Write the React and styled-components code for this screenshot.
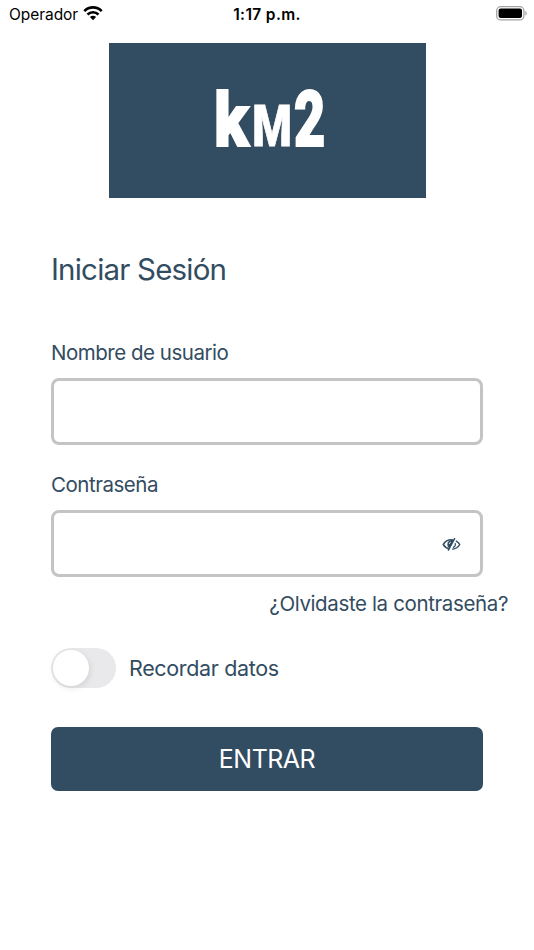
import React, { useState } from "react";
import styled, { createGlobalStyle } from "styled-components";

const NAVY = "#324c61";

const App = () => {
  const [remember, setRemember] = useState(false);
  const [visible, setVisible] = useState(false);

  return (
    <Screen>
      <GlobalStyle />
      <StatusBar>
        <Carrier>
          <span>Operador</span>
          <WifiIcon />
        </Carrier>
        <Clock>1:17 p.m.</Clock>
        <BatteryIcon />
      </StatusBar>
      <Logo>
        <LogoLetter $size={75} $width={35} $stretch={0.84} $stroke={2}>
          k
        </LogoLetter>
        <LogoLetter $size={58} $width={36} $stretch={0.78} $stroke={0.8}>
          M
        </LogoLetter>
        <LogoLetter $size={78} $width={29} $stretch={0.69} $stroke={2}>
          2
        </LogoLetter>
      </Logo>
      <Form onSubmit={(e) => e.preventDefault()}>
        <Title>Iniciar Sesión</Title>
        <Label htmlFor="user">Nombre de usuario</Label>
        <Field>
          <Input id="user" type="text" />
        </Field>
        <Label htmlFor="password">Contraseña</Label>
        <Field>
          <Input id="password" type={visible ? "text" : "password"} />
          <EyeButton type="button" onClick={() => setVisible(!visible)}>
            <EyeOffIcon />
          </EyeButton>
        </Field>
        <Forgot>¿Olvidaste la contraseña?</Forgot>
        <Remember>
          <Switch
            type="button"
            role="switch"
            aria-checked={remember}
            $on={remember}
            onClick={() => setRemember(!remember)}
          >
            <Knob />
          </Switch>
          <RememberText>Recordar datos</RememberText>
        </Remember>
        <Submit type="submit">ENTRAR</Submit>
      </Form>
    </Screen>
  );
};

export default App;

const WifiIcon = () => (
  <svg width="20" height="15" viewBox="0 0 20 15" fill="none" stroke="#000">
    <path d="M1.3 5.1C6.2.2 13.8.2 18.7 5.1" strokeWidth="2.7" />
    <path d="M4.5 8.5c3.1-3 7.9-3 11 0" strokeWidth="2.6" />
    <path d="M6.9 11.1c1.8-1.7 4.4-1.7 6.2 0L10 14.3z" fill="#000" stroke="none" />
  </svg>
);

const BatteryIcon = () => (
  <svg width="32" height="15" viewBox="0 0 32 15">
    <rect x=".7" y=".7" width="27.2" height="13.2" rx="4" fill="none" stroke="#a3a3a3" strokeWidth="1.3" />
    <rect x="2.6" y="2.6" width="23.4" height="9.4" rx="2" fill="#000" />
    <path d="M29.3 5c1.9.6 1.9 4 0 4.6z" fill="#a3a3a3" />
  </svg>
);

const EyeOffIcon = () => (
  <svg width="19" height="15" viewBox="0 0 20 16" fill="none" stroke={NAVY}>
    <path d="M7.6 12.7C4.6 12 2.4 10 1.2 8 3 4.9 6.2 3 10 3q1.2 0 2.2.3" strokeWidth="1.6" />
    <path d="M14.6 4.2C16.6 5.2 18 6.6 18.8 8c-1.6 2.9-4.6 4.7-8 5" strokeWidth="1.5" />
    <path d="M12.6 3.2 7.8 12A4.5 4.5 0 0 1 5.5 8c0-2.6 2-4.5 4.5-4.8z" fill={NAVY} stroke="none" />
    <path d="M13.6 1.2 6.4 14.6" strokeWidth="1.5" />
    <path d="M14 6.6c.5 2.1-.5 3.9-2.4 4.7" strokeWidth="1.3" />
    <path d="M7.6 7.4c.2-1 .8-1.7 1.7-2" stroke="#fff" strokeWidth=".9" />
  </svg>
);

const GlobalStyle = createGlobalStyle`
  * {
    box-sizing: border-box;
  }

  body {
    margin: 0;
    background: #fff;
    font-family: Inter, "Liberation Sans", sans-serif;
  }
`;

const Screen = styled.main`
  display: flex;
  flex-direction: column;
  align-items: center;
  width: 534px;
  height: 950px;
  overflow: hidden;
  background: #fff;
`;

const StatusBar = styled.header`
  display: grid;
  grid-template-columns: 1fr auto 1fr;
  align-items: center;
  width: 100%;
  height: 27px;
  padding: 0 6px 0 9px;
  color: #000;
  font-size: 15.5px;

  > svg {
    justify-self: end;
  }
`;

const Carrier = styled.div`
  display: flex;
  align-items: center;
  gap: 5px;
  letter-spacing: -0.05px;

  > span {
    padding-top: 1px;
  }
`;

const Clock = styled.div`
  padding: 1px 3px 0 0;
  font-weight: 600;
  letter-spacing: 0.35px;
`;

const Logo = styled.div`
  display: flex;
  align-items: baseline;
  justify-content: center;
  gap: 5px;
  width: 317px;
  height: 155px;
  margin-top: 16px;
  padding-left: 4px;
  background: ${NAVY};
  color: #fff;
  font-family: Roboto, "Liberation Sans", sans-serif;
  font-weight: 900;
  line-height: 153px;
`;

const LogoLetter = styled.span`
  display: flex;
  justify-content: center;
  width: ${({ $width }) => $width}px;
  font-size: ${({ $size }) => $size}px;
  transform: scaleX(${({ $stretch }) => $stretch});
  -webkit-text-stroke: ${({ $stroke }) => $stroke}px #fff;
`;

const Form = styled.form`
  display: flex;
  flex-direction: column;
  width: 432px;
  color: ${NAVY};
`;

const Title = styled.h1`
  margin: 51px 0 52px;
  font-size: 29.5px;
  font-weight: 400;
  line-height: 40px;
  letter-spacing: -0.8px;
`;

const Label = styled.label`
  height: 37px;
  font-size: 20.5px;
  line-height: 24px;
  letter-spacing: -0.48px;
`;

const Field = styled.div`
  display: flex;
  align-items: center;
  height: 67px;
  margin-bottom: 28px;
  padding: 0 19px;
  border: 3px solid #c4c4c4;
  border-radius: 8px;
`;

const Input = styled.input`
  flex: 1;
  min-width: 0;
  height: 100%;
  border: 0;
  outline: 0;
  background: transparent;
  color: inherit;
  font: inherit;
  font-size: 20px;
`;

const EyeButton = styled.button`
  display: flex;
  padding: 1px 0 0;
  border: 0;
  background: none;
`;

const Forgot = styled.a`
  align-self: flex-end;
  margin: -14px -25px 0 0;
  font-size: 20.5px;
  line-height: 26px;
  letter-spacing: -0.37px;
  white-space: nowrap;
`;

const Remember = styled.div`
  display: flex;
  align-items: center;
  gap: 13px;
  height: 40px;
  margin-top: 31px;
`;

const Switch = styled.button`
  display: flex;
  align-items: center;
  justify-content: ${({ $on }) => ($on ? "flex-end" : "flex-start")};
  width: 65px;
  height: 40px;
  padding: 2px;
  border: 0;
  border-radius: 20px;
  background: ${({ $on }) => ($on ? NAVY : "#e9e9eb")};
`;

const Knob = styled.span`
  width: 36px;
  height: 36px;
  border-radius: 50%;
  background: #fff;
  box-shadow: 1px 2px 6px rgba(0, 0, 0, 0.1);
`;

const RememberText = styled.span`
  font-size: 21.5px;
  letter-spacing: -0.35px;
`;

const Submit = styled.button`
  height: 64px;
  margin-top: 39px;
  padding: 0;
  border: 0;
  border-radius: 7px;
  background: ${NAVY};
  color: #fff;
  font-family: inherit;
  font-size: 25px;
  letter-spacing: -0.5px;
`;
